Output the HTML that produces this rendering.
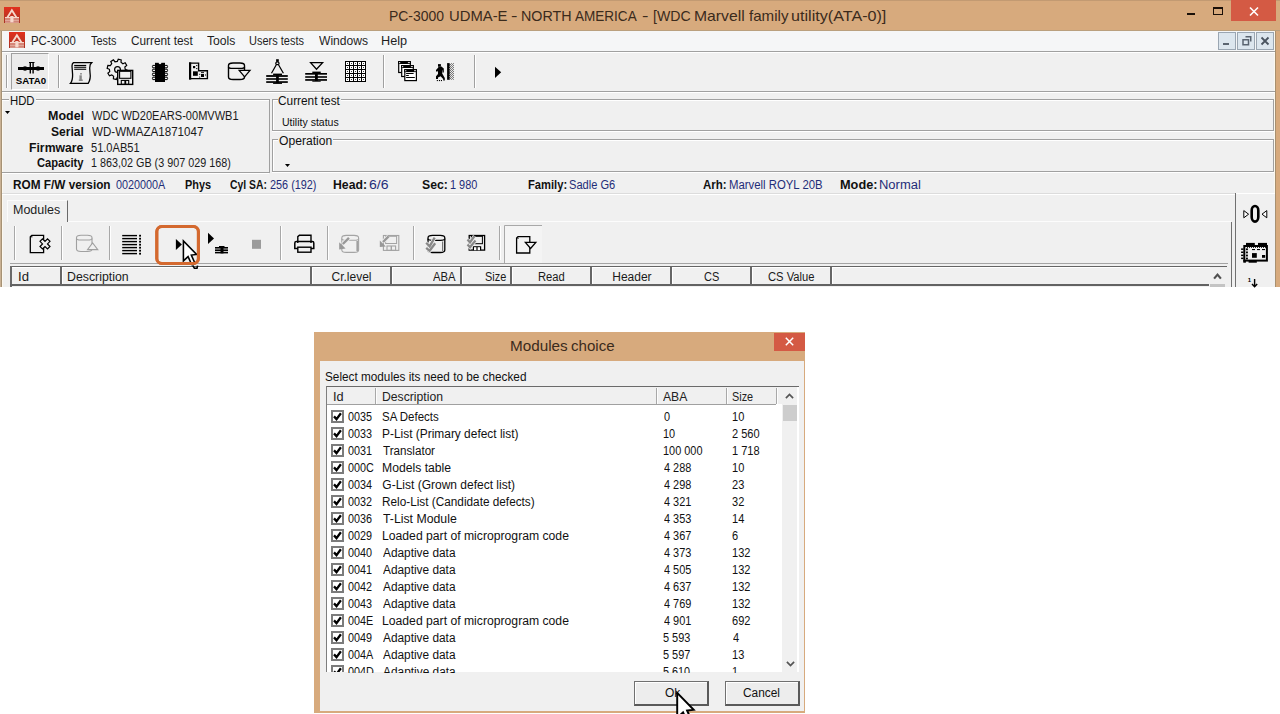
<!DOCTYPE html>
<html><head><meta charset="utf-8">
<style>
*{margin:0;padding:0;box-sizing:border-box}
html,body{width:1280px;height:714px;overflow:hidden;background:#fff;font-family:"Liberation Sans", sans-serif;color:#000}
.a{position:absolute}
svg.a{overflow:visible}
.t{position:absolute;white-space:nowrap;line-height:20px;transform-origin:0 0}
</style></head><body>
<div class="a" style="left:0px;top:0px;width:1280px;height:287px;background:#d7aa7d;"></div>
<div class="a" style="left:0px;top:0px;width:1280px;height:1px;background:#c29a72;"></div>
<div class="t" style="left:389.14px;top:5.70px;font-size:14.5px;color:#3b2b1c;transform:scaleX(0.9607);">PC-3000</div>
<div class="t" style="left:448.58px;top:5.70px;font-size:14.5px;color:#3b2b1c;transform:scaleX(1.0232);">UDMA-E</div>
<div class="t" style="left:510.67px;top:5.70px;font-size:14.5px;color:#3b2b1c;transform:scaleX(1.3333);">-</div>
<div class="t" style="left:520.51px;top:5.70px;font-size:14.5px;color:#3b2b1c;transform:scaleX(0.9857);">NORTH</div>
<div class="t" style="left:575.30px;top:5.70px;font-size:14.5px;color:#3b2b1c;transform:scaleX(0.9333);">AMERICA</div>
<div class="t" style="left:641.67px;top:5.70px;font-size:14.5px;color:#3b2b1c;transform:scaleX(1.3333);">-</div>
<div class="t" style="left:652.83px;top:5.70px;font-size:14.5px;color:#3b2b1c;transform:scaleX(0.9730);">[WDC</div>
<div class="t" style="left:693.72px;top:5.70px;font-size:14.5px;color:#3b2b1c;transform:scaleX(1.0844);">Marvell</div>
<div class="t" style="left:748.70px;top:5.70px;font-size:14.5px;color:#3b2b1c;transform:scaleX(1.0421);">family</div>
<div class="t" style="left:791.19px;top:5.70px;font-size:14.5px;color:#3b2b1c;transform:scaleX(1.1131);">utility(ATA-0)]</div>
<div class="a" style="left:1187px;top:13px;width:8px;height:2px;background:#1a1008;"></div>
<div class="a" style="left:1213px;top:7px;width:10px;height:8px;border:1px solid #1a1008;border-top-width:2px;"></div>
<div class="a" style="left:1231px;top:0px;width:45px;height:21px;background:#d45a44;"></div>
<svg class="a" style="left:1249px;top:7px" width="10" height="9" viewBox="0 0 10 9"><path d="M1 0.5L9 8.5M9 0.5L1 8.5" stroke="#fff" stroke-width="1.6"/></svg>
<div class="a" style="left:0px;top:30px;width:1280px;height:1px;background:#baa07e;"></div>
<div class="a" style="left:0px;top:31px;width:1px;height:256px;background:#c9b194;"></div>
<div class="a" style="left:1px;top:31px;width:1px;height:256px;background:#a69275;"></div>
<div class="a" style="left:1275px;top:31px;width:1px;height:256px;background:#a89070;"></div>
<div class="a" style="left:2px;top:31px;width:1273px;height:256px;background:#f0f0f0;"></div>
<div class="a" style="left:2px;top:31px;width:1273px;height:20px;background:#f5f6f7;"></div>
<div class="a" style="left:2px;top:31px;width:1px;height:256px;background:#fdf8ee;"></div>
<div class="a" style="left:1274px;top:31px;width:1px;height:256px;background:#fdf8ee;"></div>
<div class="a" style="left:2px;top:51px;width:1273px;height:1px;background:#a0a0a0;"></div>
<div class="a" style="left:2px;top:52px;width:1273px;height:1px;background:#ffffff;"></div>
<div class="t" style="left:31.35px;top:31.00px;font-size:12px;color:#1e1e1e;transform:scaleX(0.9457);">PC-3000</div>
<div class="t" style="left:91.40px;top:31.00px;font-size:12px;color:#1e1e1e;transform:scaleX(0.9071);">Tests</div>
<div class="t" style="left:130.72px;top:31.00px;font-size:12px;color:#1e1e1e;transform:scaleX(0.9839);">Current test</div>
<div class="t" style="left:207.40px;top:31.00px;font-size:12px;color:#1e1e1e;transform:scaleX(1.0143);">Tools</div>
<div class="t" style="left:249.48px;top:31.00px;font-size:12px;color:#1e1e1e;transform:scaleX(0.9153);">Users tests</div>
<div class="t" style="left:319.30px;top:31.00px;font-size:12px;color:#1e1e1e;transform:scaleX(1.0083);">Windows</div>
<div class="t" style="left:381.34px;top:31.00px;font-size:12px;color:#1e1e1e;transform:scaleX(1.0565);">Help</div>
<div class="a" style="left:1218px;top:32px;width:18px;height:18px;background:#dce6ee;border:1px solid #9aa6b2;"></div>
<div class="a" style="left:1237px;top:32px;width:18px;height:18px;background:#dce6ee;border:1px solid #9aa6b2;"></div>
<div class="a" style="left:1256px;top:32px;width:18px;height:18px;background:#dce6ee;border:1px solid #9aa6b2;"></div>
<div class="a" style="left:1223.3px;top:43px;width:6px;height:2px;background:#5a6470;"></div>
<svg class="a" style="left:1242px;top:36px" width="10" height="10" viewBox="0 0 10 10"><path d="M3.5 0.75H8.75V5.5M1 3.75H6.5V8.75H1Z" fill="none" stroke="#5a6470" stroke-width="1.5"/></svg>
<svg class="a" style="left:1261px;top:37px" width="8" height="8" viewBox="0 0 8 8"><path d="M0.5 0.5L7.5 7.5M7.5 0.5L0.5 7.5" stroke="#4a5460" stroke-width="1.8"/></svg>
<div class="a" style="left:2px;top:91px;width:1273px;height:1px;background:#a0a0a0;"></div>
<div class="a" style="left:2px;top:92px;width:1273px;height:1px;background:#ffffff;"></div>
<div class="a" style="left:6px;top:55px;width:1px;height:33px;background:#a0a0a0;"></div>
<div class="a" style="left:7px;top:55px;width:1px;height:33px;background:#ffffff;"></div>
<div class="a" style="left:11px;top:53px;width:38px;height:37px;background:#ebebeb;border:1px solid;border-color:#a0a0a0 #fff #fff #a0a0a0;"></div>
<div class="a" style="left:58px;top:55px;width:1px;height:33px;background:#a0a0a0;"></div>
<div class="a" style="left:59px;top:55px;width:1px;height:33px;background:#ffffff;"></div>
<div class="a" style="left:383px;top:55px;width:1px;height:33px;background:#a0a0a0;"></div>
<div class="a" style="left:384px;top:55px;width:1px;height:33px;background:#ffffff;"></div>
<div class="a" style="left:474px;top:55px;width:1px;height:33px;background:#a0a0a0;"></div>
<div class="a" style="left:475px;top:55px;width:1px;height:33px;background:#ffffff;"></div>
<div class="a" style="left:2px;top:99px;width:267px;height:1px;background:#a0a0a0;"></div>
<div class="a" style="left:2px;top:100px;width:267px;height:1px;background:#fff;"></div>
<div class="a" style="left:2px;top:172px;width:267px;height:1px;background:#a0a0a0;"></div>
<div class="a" style="left:2px;top:173px;width:267px;height:1px;background:#fff;"></div>
<div class="a" style="left:269px;top:99px;width:1px;height:74px;background:#a0a0a0;"></div>
<div class="a" style="left:9px;top:93px;width:27px;height:12px;background:#f0f0f0;"></div>
<div class="t" style="left:9.66px;top:90.80px;font-size:12px;color:#111;transform:scaleX(0.9440);">HDD</div>
<svg class="a" style="left:5px;top:111px" width="5" height="3" viewBox="0 0 5 3"><path d="M0 0H5L2.5 3Z" fill="#000"/></svg>
<div class="t" style="left:47.66px;top:105.80px;font-size:12px;color:#111;font-weight:bold;transform:scaleX(1.0394);">Model</div>
<div class="t" style="left:91.60px;top:105.80px;font-size:12px;color:#1a1a1a;transform:scaleX(0.9201);">WDC WD20EARS-00MVWB1</div>
<div class="t" style="left:50.79px;top:121.80px;font-size:12px;color:#111;font-weight:bold;transform:scaleX(1.0065);">Serial</div>
<div class="t" style="left:91.60px;top:121.80px;font-size:12px;color:#1a1a1a;transform:scaleX(0.9652);">WD-WMAZA1871047</div>
<div class="t" style="left:28.98px;top:137.50px;font-size:12px;color:#111;font-weight:bold;transform:scaleX(1.0192);">Firmware</div>
<div class="t" style="left:90.68px;top:137.50px;font-size:12px;color:#1a1a1a;transform:scaleX(0.9216);">51.0AB51</div>
<div class="t" style="left:36.50px;top:153.30px;font-size:12px;color:#111;font-weight:bold;transform:scaleX(0.9300);">Capacity</div>
<div class="t" style="left:90.70px;top:153.30px;font-size:12px;color:#1a1a1a;transform:scaleX(0.8994);">1 863,02 GB (3 907 029 168)</div>
<div class="a" style="left:272px;top:99px;width:1002px;height:1px;background:#a0a0a0;"></div>
<div class="a" style="left:273px;top:100px;width:1001px;height:1px;background:#fff;"></div>
<div class="a" style="left:272px;top:130px;width:1002px;height:1px;background:#a0a0a0;"></div>
<div class="a" style="left:272px;top:131px;width:1002px;height:1px;background:#fff;"></div>
<div class="a" style="left:272px;top:99px;width:1px;height:32px;background:#a0a0a0;"></div>
<div class="a" style="left:273px;top:100px;width:1px;height:30px;background:#fff;"></div>
<div class="a" style="left:1273px;top:99px;width:1px;height:32px;background:#a0a0a0;"></div>
<div class="a" style="left:278px;top:93px;width:63px;height:12px;background:#f0f0f0;"></div>
<div class="t" style="left:278.41px;top:90.60px;font-size:12px;color:#111;transform:scaleX(0.9871);">Current test</div>
<div class="t" style="left:281.54px;top:112.00px;font-size:11px;color:#111;transform:scaleX(0.9569);">Utility status</div>
<div class="a" style="left:272px;top:139px;width:1002px;height:1px;background:#a0a0a0;"></div>
<div class="a" style="left:273px;top:140px;width:1001px;height:1px;background:#fff;"></div>
<div class="a" style="left:272px;top:171px;width:1002px;height:1px;background:#a0a0a0;"></div>
<div class="a" style="left:272px;top:172px;width:1002px;height:1px;background:#fff;"></div>
<div class="a" style="left:272px;top:139px;width:1px;height:33px;background:#a0a0a0;"></div>
<div class="a" style="left:273px;top:140px;width:1px;height:31px;background:#fff;"></div>
<div class="a" style="left:1273px;top:139px;width:1px;height:33px;background:#a0a0a0;"></div>
<div class="a" style="left:278px;top:133px;width:55px;height:12px;background:#f0f0f0;"></div>
<div class="t" style="left:279.40px;top:130.70px;font-size:12px;color:#111;transform:scaleX(1.0096);">Operation</div>
<svg class="a" style="left:285px;top:164px" width="5" height="3" viewBox="0 0 5 3"><path d="M0 0H5L2.5 3Z" fill="#000"/></svg>
<div class="t" style="left:12.77px;top:174.80px;font-size:12px;color:#111;font-weight:bold;transform:scaleX(0.9821);">ROM F/W version</div>
<div class="t" style="left:115.50px;top:174.80px;font-size:12px;color:#1f2d78;transform:scaleX(0.9000);">0020000A</div>
<div class="t" style="left:184.59px;top:174.80px;font-size:12px;color:#111;font-weight:bold;transform:scaleX(0.9074);">Phys</div>
<div class="t" style="left:229.50px;top:174.80px;font-size:12px;color:#111;font-weight:bold;transform:scaleX(0.8631);">Cyl SA:</div>
<div class="t" style="left:269.85px;top:174.80px;font-size:12px;color:#1f2d78;transform:scaleX(0.9050);">256 (192)</div>
<div class="t" style="left:333.38px;top:174.80px;font-size:12px;color:#111;font-weight:bold;transform:scaleX(1.0194);">Head:</div>
<div class="t" style="left:368.83px;top:174.80px;font-size:12px;color:#1f2d78;transform:scaleX(1.1667);">6/6</div>
<div class="t" style="left:421.98px;top:174.80px;font-size:12px;color:#111;font-weight:bold;transform:scaleX(1.0217);">Sec:</div>
<div class="t" style="left:449.69px;top:174.80px;font-size:12px;color:#1f2d78;transform:scaleX(0.9103);">1 980</div>
<div class="t" style="left:527.82px;top:174.80px;font-size:12px;color:#111;font-weight:bold;transform:scaleX(0.9313);">Family:</div>
<div class="t" style="left:569.08px;top:174.80px;font-size:12px;color:#1f2d78;transform:scaleX(0.9245);">Sadle G6</div>
<div class="t" style="left:703.00px;top:174.80px;font-size:12px;color:#111;font-weight:bold;transform:scaleX(0.9583);">Arh:</div>
<div class="t" style="left:729.35px;top:174.80px;font-size:12px;color:#1f2d78;transform:scaleX(0.9459);">Marvell ROYL 20B</div>
<div class="t" style="left:839.94px;top:174.80px;font-size:12px;color:#111;font-weight:bold;transform:scaleX(1.0606);">Mode:</div>
<div class="t" style="left:878.92px;top:174.80px;font-size:12px;color:#1f2d78;transform:scaleX(1.0811);">Normal</div>
<div class="a" style="left:2px;top:193px;width:1233px;height:1px;background:#dcdcdc;"></div>
<div class="a" style="left:2px;top:194px;width:1233px;height:1px;background:#ffffff;"></div>
<div class="a" style="left:7px;top:200px;width:61px;height:22px;background:#f0f0f0;border:1px solid #fbfbfb;border-bottom:none;border-right:1.6px solid #6a6a6a;"></div>
<div class="t" style="left:13.21px;top:199.75px;font-size:12px;color:#222;transform:scaleX(1.0398);">Modules</div>
<div class="a" style="left:68px;top:221px;width:1163px;height:1px;background:#fcfcfc;"></div>
<div class="a" style="left:1231px;top:222px;width:1.4px;height:65px;background:#707070;"></div>
<div class="a" style="left:1235px;top:193px;width:1.4px;height:94px;background:#707070;"></div>
<div class="a" style="left:1236.4px;top:193px;width:38.6px;height:94px;background:#f0f0f0;"></div>
<div class="a" style="left:1236.4px;top:193px;width:38.6px;height:1px;background:#fff;"></div>
<div class="a" style="left:14px;top:226px;width:1px;height:34px;background:#a8a8a8;"></div>
<div class="a" style="left:15px;top:226px;width:1px;height:34px;background:#fff;"></div>
<div class="a" style="left:61px;top:226px;width:1px;height:34px;background:#a8a8a8;"></div>
<div class="a" style="left:62px;top:226px;width:1px;height:34px;background:#fff;"></div>
<div class="a" style="left:109px;top:226px;width:1px;height:34px;background:#a8a8a8;"></div>
<div class="a" style="left:110px;top:226px;width:1px;height:34px;background:#fff;"></div>
<div class="a" style="left:280px;top:226px;width:1px;height:34px;background:#a8a8a8;"></div>
<div class="a" style="left:281px;top:226px;width:1px;height:34px;background:#fff;"></div>
<div class="a" style="left:327px;top:226px;width:1px;height:34px;background:#a8a8a8;"></div>
<div class="a" style="left:328px;top:226px;width:1px;height:34px;background:#fff;"></div>
<div class="a" style="left:413px;top:226px;width:1px;height:34px;background:#a8a8a8;"></div>
<div class="a" style="left:414px;top:226px;width:1px;height:34px;background:#fff;"></div>
<div class="a" style="left:499px;top:226px;width:1px;height:34px;background:#a8a8a8;"></div>
<div class="a" style="left:500px;top:226px;width:1px;height:34px;background:#fff;"></div>
<div class="a" style="left:504px;top:226px;width:38px;height:37px;background:#f4f4f4;"></div>
<div class="a" style="left:10px;top:263px;width:1218px;height:1px;background:#a4a4a4;"></div>
<div class="a" style="left:10px;top:265.5px;width:1217px;height:1.6px;background:#656565;"></div>
<div class="a" style="left:10.4px;top:265.5px;width:1.6px;height:21px;background:#6a6a6a;"></div>
<div class="a" style="left:12px;top:267px;width:1198px;height:17.5px;background:#f0f0f0;"></div>
<div class="a" style="left:12px;top:267px;width:1198px;height:1px;background:#ffffff;"></div>
<div class="a" style="left:10.4px;top:284.4px;width:1199px;height:1.8px;background:#626262;"></div>
<div class="a" style="left:1210px;top:284.2px;width:15px;height:2.8px;background:#c4c4c4;"></div>
<div class="a" style="left:60.3px;top:266.5px;width:1.5px;height:19px;background:#666;"></div>
<div class="a" style="left:61.8px;top:267px;width:1px;height:17px;background:#fff;"></div>
<div class="a" style="left:310.3px;top:266.5px;width:1.5px;height:19px;background:#666;"></div>
<div class="a" style="left:311.8px;top:267px;width:1px;height:17px;background:#fff;"></div>
<div class="a" style="left:390.3px;top:266.5px;width:1.5px;height:19px;background:#666;"></div>
<div class="a" style="left:391.8px;top:267px;width:1px;height:17px;background:#fff;"></div>
<div class="a" style="left:460.3px;top:266.5px;width:1.5px;height:19px;background:#666;"></div>
<div class="a" style="left:461.8px;top:267px;width:1px;height:17px;background:#fff;"></div>
<div class="a" style="left:510.3px;top:266.5px;width:1.5px;height:19px;background:#666;"></div>
<div class="a" style="left:511.8px;top:267px;width:1px;height:17px;background:#fff;"></div>
<div class="a" style="left:590.3px;top:266.5px;width:1.5px;height:19px;background:#666;"></div>
<div class="a" style="left:591.8px;top:267px;width:1px;height:17px;background:#fff;"></div>
<div class="a" style="left:670.3px;top:266.5px;width:1.5px;height:19px;background:#666;"></div>
<div class="a" style="left:671.8px;top:267px;width:1px;height:17px;background:#fff;"></div>
<div class="a" style="left:750.3px;top:266.5px;width:1.5px;height:19px;background:#666;"></div>
<div class="a" style="left:751.8px;top:267px;width:1px;height:17px;background:#fff;"></div>
<div class="a" style="left:830.3px;top:266.5px;width:1.5px;height:19px;background:#666;"></div>
<div class="a" style="left:831.8px;top:267px;width:1px;height:17px;background:#fff;"></div>
<div class="t" style="left:17.66px;top:266.50px;font-size:12px;color:#1a1a1a;transform:scaleX(1.0938);">Id</div>
<div class="t" style="left:66.97px;top:266.50px;font-size:12px;color:#1a1a1a;transform:scaleX(1.0259);">Description</div>
<div class="t" style="left:331.50px;top:266.50px;font-size:12px;color:#1a1a1a;">Cr.level</div>
<div class="t" style="left:433.00px;top:266.50px;font-size:12px;color:#1a1a1a;transform:scaleX(0.9375);">ABA</div>
<div class="t" style="left:485.34px;top:266.50px;font-size:12px;color:#1a1a1a;transform:scaleX(0.9091);">Size</div>
<div class="t" style="left:538.31px;top:266.50px;font-size:12px;color:#1a1a1a;transform:scaleX(0.9352);">Read</div>
<div class="t" style="left:612.25px;top:266.50px;font-size:12px;color:#1a1a1a;">Header</div>
<div class="t" style="left:704.08px;top:266.50px;font-size:12px;color:#1a1a1a;transform:scaleX(0.9167);">CS</div>
<div class="t" style="left:768.32px;top:266.50px;font-size:12px;color:#1a1a1a;transform:scaleX(0.9337);">CS Value</div>
<svg class="a" style="left:1213px;top:272px" width="9" height="8" viewBox="0 0 9 8"><path d="M1.1 6.6L4.5 2.6L7.9 6.6" fill="none" stroke="#505050" stroke-width="2.2"/></svg>
<div class="a" style="left:314px;top:332px;width:491px;height:381px;background:#d7aa7d;"></div>
<div class="a" style="left:319.5px;top:360.5px;width:484px;height:350.5px;background:#f0f0f0;"></div>
<div class="t" style="left:509.65px;top:335.80px;font-size:14.5px;color:#3b2b1c;transform:scaleX(1.0528);">Modules</div>
<div class="t" style="left:570.56px;top:335.80px;font-size:14.5px;color:#3b2b1c;transform:scaleX(1.0400);">choice</div>
<div class="a" style="left:774px;top:332.5px;width:30.5px;height:18.5px;background:#d45a44;"></div>
<svg class="a" style="left:785px;top:337px" width="9" height="9" viewBox="0 0 9 9"><path d="M0.8 0.8L8.2 8.2M8.2 0.8L0.8 8.2" stroke="#fff" stroke-width="1.5"/></svg>
<div class="t" style="left:324.52px;top:366.80px;font-size:12px;color:#111;transform:scaleX(0.9804);">Select modules its need to be checked</div>
<div class="a" style="left:325.5px;top:385.8px;width:473.2px;height:286.7px;background:#ffffff;border-left:1.6px solid #7e7e7e;border-top:1.6px solid #6a6a6a;"></div>
<div class="a" style="left:327px;top:387.4px;width:455px;height:16.6px;background:#f0f0f0;"></div>
<div class="a" style="left:327px;top:403.6px;width:449px;height:1px;background:#a0a0a0;"></div>
<div class="a" style="left:375.2px;top:388px;width:1px;height:16px;background:#a8a8a8;"></div>
<div class="a" style="left:376.2px;top:388px;width:1px;height:16px;background:#fdfdfd;"></div>
<div class="a" style="left:655.5px;top:388px;width:1px;height:16px;background:#a8a8a8;"></div>
<div class="a" style="left:656.5px;top:388px;width:1px;height:16px;background:#fdfdfd;"></div>
<div class="a" style="left:725.5px;top:388px;width:1px;height:16px;background:#a8a8a8;"></div>
<div class="a" style="left:726.5px;top:388px;width:1px;height:16px;background:#fdfdfd;"></div>
<div class="a" style="left:775.5px;top:388px;width:1px;height:16px;background:#a8a8a8;"></div>
<div class="a" style="left:776.5px;top:388px;width:1px;height:16px;background:#fdfdfd;"></div>
<div class="t" style="left:332.84px;top:386.80px;font-size:12px;color:#222;transform:scaleX(1.0625);">Id</div>
<div class="t" style="left:382.28px;top:386.80px;font-size:12px;color:#222;transform:scaleX(1.0155);">Description</div>
<div class="t" style="left:663.20px;top:386.80px;font-size:12px;color:#222;transform:scaleX(1.0125);">ABA</div>
<div class="t" style="left:732.40px;top:386.80px;font-size:12px;color:#222;transform:scaleX(0.9045);">Size</div>
<div class="a" style="left:782px;top:387.4px;width:15px;height:285px;background:#f0f0f0;"></div>
<div class="a" style="left:782.5px;top:404.5px;width:14px;height:16px;background:#cdcdcd;"></div>
<svg class="a" style="left:785px;top:393px" width="9" height="6" viewBox="0 0 9 6"><path d="M0.9 5.2L4.5 1.4L8.1 5.2" fill="none" stroke="#555" stroke-width="1.7"/></svg>
<svg class="a" style="left:785.5px;top:660.5px" width="9" height="6" viewBox="0 0 9 6"><path d="M0.9 0.8L4.5 4.6L8.1 0.8" fill="none" stroke="#555" stroke-width="1.7"/></svg>
<div class="t" style="left:347.50px;top:406.80px;font-size:12px;color:#111;transform:scaleX(0.9000);">0035</div>
<div class="t" style="left:382.34px;top:406.80px;font-size:12px;color:#111;transform:scaleX(0.9552);">SA Defects</div>
<div class="t" style="left:663.50px;top:406.80px;font-size:12px;color:#111;transform:scaleX(0.9100);">0</div>
<div class="t" style="left:732.38px;top:406.80px;font-size:12px;color:#111;transform:scaleX(0.9200);">10</div>
<div class="t" style="left:347.50px;top:423.80px;font-size:12px;color:#111;transform:scaleX(0.9000);">0033</div>
<div class="t" style="left:382.31px;top:423.80px;font-size:12px;color:#111;transform:scaleX(0.9934);">P-List (Primary defect list)</div>
<div class="t" style="left:662.59px;top:423.80px;font-size:12px;color:#111;transform:scaleX(0.9100);">10</div>
<div class="t" style="left:732.38px;top:423.80px;font-size:12px;color:#111;transform:scaleX(0.9200);">2 560</div>
<div class="t" style="left:347.50px;top:440.80px;font-size:12px;color:#111;transform:scaleX(0.9000);">0031</div>
<div class="t" style="left:383.30px;top:440.80px;font-size:12px;color:#111;transform:scaleX(0.9704);">Translator</div>
<div class="t" style="left:662.59px;top:440.80px;font-size:12px;color:#111;transform:scaleX(0.9100);">100 000</div>
<div class="t" style="left:732.38px;top:440.80px;font-size:12px;color:#111;transform:scaleX(0.9200);">1 718</div>
<div class="t" style="left:347.50px;top:457.80px;font-size:12px;color:#111;transform:scaleX(0.9000);">000C</div>
<div class="t" style="left:382.29px;top:457.80px;font-size:12px;color:#111;transform:scaleX(1.0149);">Models table</div>
<div class="t" style="left:663.50px;top:457.80px;font-size:12px;color:#111;transform:scaleX(0.9100);">4 288</div>
<div class="t" style="left:732.38px;top:457.80px;font-size:12px;color:#111;transform:scaleX(0.9200);">10</div>
<div class="t" style="left:347.50px;top:474.80px;font-size:12px;color:#111;transform:scaleX(0.9000);">0034</div>
<div class="t" style="left:382.30px;top:474.80px;font-size:12px;color:#111;">G-List (Grown defect list)</div>
<div class="t" style="left:663.50px;top:474.80px;font-size:12px;color:#111;transform:scaleX(0.9100);">4 298</div>
<div class="t" style="left:732.38px;top:474.80px;font-size:12px;color:#111;transform:scaleX(0.9200);">23</div>
<div class="t" style="left:347.50px;top:491.80px;font-size:12px;color:#111;transform:scaleX(0.9000);">0032</div>
<div class="t" style="left:382.32px;top:491.80px;font-size:12px;color:#111;transform:scaleX(0.9825);">Relo-List (Candidate defects)</div>
<div class="t" style="left:663.50px;top:491.80px;font-size:12px;color:#111;transform:scaleX(0.9100);">4 321</div>
<div class="t" style="left:732.38px;top:491.80px;font-size:12px;color:#111;transform:scaleX(0.9200);">32</div>
<div class="t" style="left:347.50px;top:508.80px;font-size:12px;color:#111;transform:scaleX(0.9000);">0036</div>
<div class="t" style="left:383.30px;top:508.80px;font-size:12px;color:#111;transform:scaleX(1.0236);">T-List Module</div>
<div class="t" style="left:663.50px;top:508.80px;font-size:12px;color:#111;transform:scaleX(0.9100);">4 353</div>
<div class="t" style="left:732.38px;top:508.80px;font-size:12px;color:#111;transform:scaleX(0.9200);">14</div>
<div class="t" style="left:347.50px;top:525.80px;font-size:12px;color:#111;transform:scaleX(0.9000);">0029</div>
<div class="t" style="left:382.28px;top:525.80px;font-size:12px;color:#111;transform:scaleX(1.0153);">Loaded part of microprogram code</div>
<div class="t" style="left:663.50px;top:525.80px;font-size:12px;color:#111;transform:scaleX(0.9100);">4 367</div>
<div class="t" style="left:732.38px;top:525.80px;font-size:12px;color:#111;transform:scaleX(0.9200);">6</div>
<div class="t" style="left:347.50px;top:542.80px;font-size:12px;color:#111;transform:scaleX(0.9000);">0040</div>
<div class="t" style="left:383.30px;top:542.80px;font-size:12px;color:#111;transform:scaleX(0.9877);">Adaptive data</div>
<div class="t" style="left:663.50px;top:542.80px;font-size:12px;color:#111;transform:scaleX(0.9100);">4 373</div>
<div class="t" style="left:732.38px;top:542.80px;font-size:12px;color:#111;transform:scaleX(0.9200);">132</div>
<div class="t" style="left:347.50px;top:559.80px;font-size:12px;color:#111;transform:scaleX(0.9000);">0041</div>
<div class="t" style="left:383.30px;top:559.80px;font-size:12px;color:#111;transform:scaleX(0.9877);">Adaptive data</div>
<div class="t" style="left:663.50px;top:559.80px;font-size:12px;color:#111;transform:scaleX(0.9100);">4 505</div>
<div class="t" style="left:732.38px;top:559.80px;font-size:12px;color:#111;transform:scaleX(0.9200);">132</div>
<div class="t" style="left:347.50px;top:576.80px;font-size:12px;color:#111;transform:scaleX(0.9000);">0042</div>
<div class="t" style="left:383.30px;top:576.80px;font-size:12px;color:#111;transform:scaleX(0.9877);">Adaptive data</div>
<div class="t" style="left:663.50px;top:576.80px;font-size:12px;color:#111;transform:scaleX(0.9100);">4 637</div>
<div class="t" style="left:732.38px;top:576.80px;font-size:12px;color:#111;transform:scaleX(0.9200);">132</div>
<div class="t" style="left:347.50px;top:593.80px;font-size:12px;color:#111;transform:scaleX(0.9000);">0043</div>
<div class="t" style="left:383.30px;top:593.80px;font-size:12px;color:#111;transform:scaleX(0.9877);">Adaptive data</div>
<div class="t" style="left:663.50px;top:593.80px;font-size:12px;color:#111;transform:scaleX(0.9100);">4 769</div>
<div class="t" style="left:732.38px;top:593.80px;font-size:12px;color:#111;transform:scaleX(0.9200);">132</div>
<div class="t" style="left:347.50px;top:610.80px;font-size:12px;color:#111;transform:scaleX(0.9000);">004E</div>
<div class="t" style="left:382.28px;top:610.80px;font-size:12px;color:#111;transform:scaleX(1.0153);">Loaded part of microprogram code</div>
<div class="t" style="left:663.50px;top:610.80px;font-size:12px;color:#111;transform:scaleX(0.9100);">4 901</div>
<div class="t" style="left:732.38px;top:610.80px;font-size:12px;color:#111;transform:scaleX(0.9200);">692</div>
<div class="t" style="left:347.50px;top:627.80px;font-size:12px;color:#111;transform:scaleX(0.9000);">0049</div>
<div class="t" style="left:383.30px;top:627.80px;font-size:12px;color:#111;transform:scaleX(0.9877);">Adaptive data</div>
<div class="t" style="left:662.59px;top:627.80px;font-size:12px;color:#111;transform:scaleX(0.9100);">5 593</div>
<div class="t" style="left:733.30px;top:627.80px;font-size:12px;color:#111;transform:scaleX(0.9200);">4</div>
<div class="t" style="left:347.50px;top:644.80px;font-size:12px;color:#111;transform:scaleX(0.9000);">004A</div>
<div class="t" style="left:383.30px;top:644.80px;font-size:12px;color:#111;transform:scaleX(0.9877);">Adaptive data</div>
<div class="t" style="left:662.59px;top:644.80px;font-size:12px;color:#111;transform:scaleX(0.9100);">5 597</div>
<div class="t" style="left:732.38px;top:644.80px;font-size:12px;color:#111;transform:scaleX(0.9200);">13</div>
<div class="a" style="left:327px;top:662px;width:455px;height:10.5px;overflow:hidden">
<div class="t" style="left:20.50px;top:-0.20px;font-size:12px;color:#111;transform:scaleX(0.9000);">004D</div>
<div class="t" style="left:56.30px;top:-0.20px;font-size:12px;color:#111;transform:scaleX(0.9900);">Adaptive data</div>
<div class="t" style="left:335.60px;top:-0.20px;font-size:12px;color:#111;transform:scaleX(0.9000);">5 610</div>
<div class="t" style="left:405.40px;top:-0.20px;font-size:12px;color:#111;transform:scaleX(0.9000);">1</div>
</div>
<div class="a" style="left:331px;top:410.2px;width:13px;height:13.0px;overflow:hidden"><div style="width:13px;height:13px;border:2px solid #7c7c7c;background:#fff"></div><svg class="a" style="left:0;top:0" width="13" height="13" viewBox="0 0 13 13"><path d="M3 6.4L5.5 9.1L9.9 3.3" fill="none" stroke="#000" stroke-width="2.3"/></svg></div><div class="a" style="left:331px;top:427.2px;width:13px;height:13.0px;overflow:hidden"><div style="width:13px;height:13px;border:2px solid #7c7c7c;background:#fff"></div><svg class="a" style="left:0;top:0" width="13" height="13" viewBox="0 0 13 13"><path d="M3 6.4L5.5 9.1L9.9 3.3" fill="none" stroke="#000" stroke-width="2.3"/></svg></div><div class="a" style="left:331px;top:444.2px;width:13px;height:13.0px;overflow:hidden"><div style="width:13px;height:13px;border:2px solid #7c7c7c;background:#fff"></div><svg class="a" style="left:0;top:0" width="13" height="13" viewBox="0 0 13 13"><path d="M3 6.4L5.5 9.1L9.9 3.3" fill="none" stroke="#000" stroke-width="2.3"/></svg></div><div class="a" style="left:331px;top:461.2px;width:13px;height:13.0px;overflow:hidden"><div style="width:13px;height:13px;border:2px solid #7c7c7c;background:#fff"></div><svg class="a" style="left:0;top:0" width="13" height="13" viewBox="0 0 13 13"><path d="M3 6.4L5.5 9.1L9.9 3.3" fill="none" stroke="#000" stroke-width="2.3"/></svg></div><div class="a" style="left:331px;top:478.2px;width:13px;height:13.0px;overflow:hidden"><div style="width:13px;height:13px;border:2px solid #7c7c7c;background:#fff"></div><svg class="a" style="left:0;top:0" width="13" height="13" viewBox="0 0 13 13"><path d="M3 6.4L5.5 9.1L9.9 3.3" fill="none" stroke="#000" stroke-width="2.3"/></svg></div><div class="a" style="left:331px;top:495.2px;width:13px;height:13.0px;overflow:hidden"><div style="width:13px;height:13px;border:2px solid #7c7c7c;background:#fff"></div><svg class="a" style="left:0;top:0" width="13" height="13" viewBox="0 0 13 13"><path d="M3 6.4L5.5 9.1L9.9 3.3" fill="none" stroke="#000" stroke-width="2.3"/></svg></div><div class="a" style="left:331px;top:512.2px;width:13px;height:13.0px;overflow:hidden"><div style="width:13px;height:13px;border:2px solid #7c7c7c;background:#fff"></div><svg class="a" style="left:0;top:0" width="13" height="13" viewBox="0 0 13 13"><path d="M3 6.4L5.5 9.1L9.9 3.3" fill="none" stroke="#000" stroke-width="2.3"/></svg></div><div class="a" style="left:331px;top:529.2px;width:13px;height:13.0px;overflow:hidden"><div style="width:13px;height:13px;border:2px solid #7c7c7c;background:#fff"></div><svg class="a" style="left:0;top:0" width="13" height="13" viewBox="0 0 13 13"><path d="M3 6.4L5.5 9.1L9.9 3.3" fill="none" stroke="#000" stroke-width="2.3"/></svg></div><div class="a" style="left:331px;top:546.2px;width:13px;height:13.0px;overflow:hidden"><div style="width:13px;height:13px;border:2px solid #7c7c7c;background:#fff"></div><svg class="a" style="left:0;top:0" width="13" height="13" viewBox="0 0 13 13"><path d="M3 6.4L5.5 9.1L9.9 3.3" fill="none" stroke="#000" stroke-width="2.3"/></svg></div><div class="a" style="left:331px;top:563.2px;width:13px;height:13.0px;overflow:hidden"><div style="width:13px;height:13px;border:2px solid #7c7c7c;background:#fff"></div><svg class="a" style="left:0;top:0" width="13" height="13" viewBox="0 0 13 13"><path d="M3 6.4L5.5 9.1L9.9 3.3" fill="none" stroke="#000" stroke-width="2.3"/></svg></div><div class="a" style="left:331px;top:580.2px;width:13px;height:13.0px;overflow:hidden"><div style="width:13px;height:13px;border:2px solid #7c7c7c;background:#fff"></div><svg class="a" style="left:0;top:0" width="13" height="13" viewBox="0 0 13 13"><path d="M3 6.4L5.5 9.1L9.9 3.3" fill="none" stroke="#000" stroke-width="2.3"/></svg></div><div class="a" style="left:331px;top:597.2px;width:13px;height:13.0px;overflow:hidden"><div style="width:13px;height:13px;border:2px solid #7c7c7c;background:#fff"></div><svg class="a" style="left:0;top:0" width="13" height="13" viewBox="0 0 13 13"><path d="M3 6.4L5.5 9.1L9.9 3.3" fill="none" stroke="#000" stroke-width="2.3"/></svg></div><div class="a" style="left:331px;top:614.2px;width:13px;height:13.0px;overflow:hidden"><div style="width:13px;height:13px;border:2px solid #7c7c7c;background:#fff"></div><svg class="a" style="left:0;top:0" width="13" height="13" viewBox="0 0 13 13"><path d="M3 6.4L5.5 9.1L9.9 3.3" fill="none" stroke="#000" stroke-width="2.3"/></svg></div><div class="a" style="left:331px;top:631.2px;width:13px;height:13.0px;overflow:hidden"><div style="width:13px;height:13px;border:2px solid #7c7c7c;background:#fff"></div><svg class="a" style="left:0;top:0" width="13" height="13" viewBox="0 0 13 13"><path d="M3 6.4L5.5 9.1L9.9 3.3" fill="none" stroke="#000" stroke-width="2.3"/></svg></div><div class="a" style="left:331px;top:648.2px;width:13px;height:13.0px;overflow:hidden"><div style="width:13px;height:13px;border:2px solid #7c7c7c;background:#fff"></div><svg class="a" style="left:0;top:0" width="13" height="13" viewBox="0 0 13 13"><path d="M3 6.4L5.5 9.1L9.9 3.3" fill="none" stroke="#000" stroke-width="2.3"/></svg></div><div class="a" style="left:331px;top:665.2px;width:13px;height:7.3px;overflow:hidden"><div style="width:13px;height:13px;border:2px solid #7c7c7c;background:#fff"></div><svg class="a" style="left:0;top:0" width="13" height="13" viewBox="0 0 13 13"><path d="M3 6.4L5.5 9.1L9.9 3.3" fill="none" stroke="#000" stroke-width="2.3"/></svg></div>
<div class="a" style="left:634px;top:681px;width:75px;height:24.5px;background:#ededed;border:1px solid #707070;border-right:2px solid #5a5a5a;border-bottom:2px solid #5a5a5a;box-shadow:inset 1px 1px 0 #fff;"></div>
<div class="t" style="left:665.00px;top:682.60px;font-size:12px;color:#111;">Ok</div>
<div class="a" style="left:725px;top:681px;width:75px;height:24.5px;background:#ededed;border:1px solid #707070;border-right:2px solid #5a5a5a;border-bottom:2px solid #5a5a5a;box-shadow:inset 1px 1px 0 #fff;"></div>
<div class="t" style="left:743.41px;top:682.60px;font-size:12px;color:#111;transform:scaleX(0.9889);">Cancel</div>
<svg class="a" style="left:0;top:0" width="1280" height="714" viewBox="0 0 1280 714"><rect x="18" y="67" width="26" height="3" fill="#000"/><circle cx="25" cy="68.5" r="2.3" fill="#000"/><circle cx="38" cy="68.5" r="2.3" fill="#000"/><rect x="29.6" y="62" width="1.4" height="11.5" fill="#000"/><rect x="32.4" y="62" width="1.4" height="11.5" fill="#000"/><rect x="29" y="62" width="5.5" height="1" fill="#000"/><text x="15.8" y="83.6" font-family="Liberation Sans" font-weight="bold" font-size="8.4" textLength="30.4" lengthAdjust="spacingAndGlyphs" fill="#000">SATA0</text><path d="M73.5,62.6 H91.8 L90.2,64.6 Q89.3,67.5 90,72.5 Q91,79 88.2,83.4 H70.4 Q72.8,80.5 72.6,74.5 Q72.2,69 72,66 Q72,63.5 73.5,62.6 Z" fill="none" stroke="#000" stroke-width="1.3"/><rect x="74.2" y="64.9" width="12" height="1.1" fill="#000"/><rect x="74.2" y="66.7" width="12" height="1.1" fill="#000"/><rect x="74.2" y="68.7" width="12" height="1.1" fill="#000"/><rect x="80.2" y="73" width="1.6" height="1.6" fill="#888"/><rect x="79.4" y="75.3" width="2.4" height="5.5" fill="#888"/><rect x="78.8" y="79.5" width="4" height="1.4" fill="#888"/><path d="M125.20,69.30L127.45,70.26L126.72,73.20L124.28,73.00L122.89,74.89L123.80,77.16L121.20,78.72L119.62,76.85L117.30,77.20L116.34,79.45L113.40,78.72L113.60,76.28L111.71,74.89L109.44,75.80L107.88,73.20L109.75,71.62L109.40,69.30L107.15,68.34L107.88,65.40L110.32,65.60L111.71,63.71L110.80,61.44L113.40,59.88L114.98,61.75L117.30,61.40L118.26,59.15L121.20,59.88L121.00,62.32L122.89,63.71L125.16,62.80L126.72,65.40L124.85,66.98Z" fill="none" stroke="#000" stroke-width="1.2"/><circle cx="117.5" cy="69.5" r="2.9" fill="none" stroke="#000" stroke-width="1.2"/><rect x="117.7" y="70.4" width="15" height="14" fill="#f0f0f0" stroke="#000" stroke-width="1.4"/><rect x="119.6" y="71.3" width="11.3" height="7" fill="none" stroke="#000" stroke-width="1.1"/><rect x="121.3" y="80.4" width="7.4" height="4" fill="none" stroke="#000" stroke-width="1.1"/><rect x="124.4" y="80.4" width="1.8" height="4" fill="#000"/><rect x="155" y="62.8" width="10" height="19.2" fill="#000"/><circle cx="160" cy="62.8" r="1.4" fill="#f0f0f0"/><path d="M155,65.39999999999999 H152.8 Q152,66.6 152.8,67.8 H155" fill="none" stroke="#000" stroke-width="1"/><path d="M165,65.39999999999999 H167.2 Q168,66.6 167.2,67.8 H165" fill="none" stroke="#000" stroke-width="1"/><path d="M155,69.2 H152.8 Q152,70.4 152.8,71.60000000000001 H155" fill="none" stroke="#000" stroke-width="1"/><path d="M165,69.2 H167.2 Q168,70.4 167.2,71.60000000000001 H165" fill="none" stroke="#000" stroke-width="1"/><path d="M155,73.2 H152.8 Q152,74.4 152.8,75.60000000000001 H155" fill="none" stroke="#000" stroke-width="1"/><path d="M165,73.2 H167.2 Q168,74.4 167.2,75.60000000000001 H165" fill="none" stroke="#000" stroke-width="1"/><path d="M155,77.2 H152.8 Q152,78.4 152.8,79.60000000000001 H155" fill="none" stroke="#000" stroke-width="1"/><path d="M165,77.2 H167.2 Q168,78.4 167.2,79.60000000000001 H165" fill="none" stroke="#000" stroke-width="1"/><rect x="189" y="62.2" width="2.2" height="17.5" fill="#000"/><path d="M191,63.1 H198.6 V70.8 H207.4 V78.6 H191" fill="none" stroke="#000" stroke-width="1.4"/><rect x="193" y="71.3" width="4.8" height="4.5" fill="#000"/><rect x="193" y="66" width="2.2" height="2.2" fill="#000"/><rect x="196.2" y="65" width="1.1" height="1.1" fill="#000"/><rect x="196.2" y="68" width="1.1" height="1.1" fill="#000"/><rect x="201" y="74" width="3" height="3" fill="#000"/><rect x="201" y="72.2" width="3" height="0.9" fill="#000"/><rect x="199.2" y="73.8" width="1" height="1" fill="#000"/><rect x="199.2" y="76.6" width="1" height="1" fill="#000"/><rect x="205" y="74.5" width="1" height="1" fill="#000"/><path d="M228.5,65.5 Q228.5,63 233.0,63 H240.0 Q244.5,63 244.5,65.5 V77.0 Q244.5,79.5 240.0,79.5 H233.0 Q228.5,79.5 228.5,77.0 Z" fill="none" stroke="#000" stroke-width="1.4"/><path d="M228.5,66.9 Q228.5,68.4 233.0,68.4 H240.0 Q244.5,68.4 244.5,66.9" fill="none" stroke="#000" stroke-width="1.4"/><path d="M239.2,70.4 H250 L244.6,76.8 Z" fill="#f0f0f0" stroke="#000" stroke-width="1.3"/><rect x="276.1" y="59.2" width="2.7" height="2.7" fill="#000"/><ellipse cx="277.4" cy="63.3" rx="1.7" ry="1.3" fill="#fff" stroke="#000" stroke-width="1.2"/><path d="M276.3,64.8 L271.5,73.2 M278.5,64.8 L283.4,73.2" stroke="#000" stroke-width="1.25"/><rect x="266.2" y="75.1" width="21.6" height="1.8" fill="#000"/><rect x="266.2" y="78.2" width="21.6" height="1.6" fill="#000"/><rect x="266.2" y="81.2" width="21.6" height="1.7" fill="#000"/><rect x="276.1" y="74" width="2.7" height="9" fill="#000"/><rect x="273.1" y="73.6" width="8.9" height="1.6" fill="#000"/><rect x="273.1" y="82.6" width="8.9" height="1.3" fill="#000"/><path d="M310.6,62.6 H322.6 L316.5,69.2 Z" fill="none" stroke="#000" stroke-width="1.3"/><rect x="305.2" y="73" width="21.8" height="1.7" fill="#000"/><rect x="305.2" y="76.2" width="21.8" height="1.6" fill="#000"/><rect x="305.2" y="79.1" width="21.8" height="1.7" fill="#000"/><rect x="315" y="72.5" width="2.8" height="8.5" fill="#000"/><rect x="312.3" y="71.6" width="8.4" height="1.6" fill="#000"/><rect x="312.3" y="80.6" width="8.4" height="1.1" fill="#000"/><rect x="345" y="61" width="21" height="21" fill="#000"/><rect x="346" y="62" width="3" height="3" fill="#fff"/><rect x="347" y="63" width="1" height="1" fill="#444"/><rect x="346" y="66" width="3" height="3" fill="#fff"/><rect x="347" y="67" width="1" height="1" fill="#444"/><rect x="346" y="70" width="3" height="3" fill="#fff"/><rect x="347" y="71" width="1" height="1" fill="#444"/><rect x="346" y="74" width="3" height="3" fill="#fff"/><rect x="347" y="75" width="1" height="1" fill="#444"/><rect x="346" y="78" width="3" height="3" fill="#fff"/><rect x="347" y="79" width="1" height="1" fill="#444"/><rect x="350" y="62" width="3" height="3" fill="#fff"/><rect x="351" y="63" width="1" height="1" fill="#444"/><rect x="350" y="66" width="3" height="3" fill="#fff"/><rect x="351" y="67" width="1" height="1" fill="#444"/><rect x="350" y="70" width="3" height="3" fill="#fff"/><rect x="351" y="71" width="1" height="1" fill="#444"/><rect x="350" y="74" width="3" height="3" fill="#fff"/><rect x="351" y="75" width="1" height="1" fill="#444"/><rect x="350" y="78" width="3" height="3" fill="#fff"/><rect x="351" y="79" width="1" height="1" fill="#444"/><rect x="354" y="62" width="3" height="3" fill="#fff"/><rect x="355" y="63" width="1" height="1" fill="#444"/><rect x="354" y="66" width="3" height="3" fill="#fff"/><rect x="355" y="67" width="1" height="1" fill="#444"/><rect x="354" y="70" width="3" height="3" fill="#fff"/><rect x="355" y="71" width="1" height="1" fill="#444"/><rect x="354" y="74" width="3" height="3" fill="#fff"/><rect x="355" y="75" width="1" height="1" fill="#444"/><rect x="354" y="78" width="3" height="3" fill="#fff"/><rect x="355" y="79" width="1" height="1" fill="#444"/><rect x="358" y="62" width="3" height="3" fill="#fff"/><rect x="359" y="63" width="1" height="1" fill="#444"/><rect x="358" y="66" width="3" height="3" fill="#fff"/><rect x="359" y="67" width="1" height="1" fill="#444"/><rect x="358" y="70" width="3" height="3" fill="#fff"/><rect x="359" y="71" width="1" height="1" fill="#444"/><rect x="358" y="74" width="3" height="3" fill="#fff"/><rect x="359" y="75" width="1" height="1" fill="#444"/><rect x="358" y="78" width="3" height="3" fill="#fff"/><rect x="359" y="79" width="1" height="1" fill="#444"/><rect x="362" y="62" width="3" height="3" fill="#fff"/><rect x="363" y="63" width="1" height="1" fill="#444"/><rect x="362" y="66" width="3" height="3" fill="#fff"/><rect x="363" y="67" width="1" height="1" fill="#444"/><rect x="362" y="70" width="3" height="3" fill="#fff"/><rect x="363" y="71" width="1" height="1" fill="#444"/><rect x="362" y="74" width="3" height="3" fill="#fff"/><rect x="363" y="75" width="1" height="1" fill="#444"/><rect x="362" y="78" width="3" height="3" fill="#fff"/><rect x="363" y="79" width="1" height="1" fill="#444"/><rect x="398.7" y="61.7" width="11.6" height="10.8" fill="#fff" stroke="#000" stroke-width="1.2"/><rect x="398.1" y="61.1" width="12.8" height="2.9" fill="#000"/><rect x="399.1" y="62.1" width="1.1" height="1.1" fill="#fff"/><rect x="407.90000000000003" y="62.2" width="2" height="0.9" fill="#fff"/><rect x="401.7" y="65.7" width="11.6" height="10.8" fill="#fff" stroke="#000" stroke-width="1.2"/><rect x="401.1" y="65.1" width="12.8" height="2.9" fill="#000"/><rect x="402.1" y="66.1" width="1.1" height="1.1" fill="#fff"/><rect x="410.90000000000003" y="66.19999999999999" width="2" height="0.9" fill="#fff"/><rect x="404.8" y="69.8" width="11.6" height="10.8" fill="#fff" stroke="#000" stroke-width="1.2"/><rect x="404.2" y="69.2" width="12.8" height="2.9" fill="#000"/><rect x="405.2" y="70.2" width="1.1" height="1.1" fill="#fff"/><rect x="414.0" y="70.3" width="2" height="0.9" fill="#fff"/><rect x="406.1" y="73" width="7.5" height="1" fill="#000"/><rect x="406.1" y="75" width="2.7" height="1" fill="#000"/><rect x="406.1" y="77" width="8.7" height="1" fill="#000"/><rect x="438" y="64.1" width="2.9" height="2.5" fill="#000"/><path d="M438.3,66.4 H441.4 L443.8,68.6 V72.6 H442.6 V70.2 L442.2,70.4 V73.6 L444.8,78 V80.6 H443.2 V79 L440.6,76.2 L438,77.6 V79 H436 V76.2 L438,74 V70.4 L437.6,71.6 H436 V70 L438.3,67.6 Z" fill="#000"/><rect x="436.8" y="80" width="1.1" height="1.1" fill="#000"/><rect x="438.9" y="80" width="1.1" height="1.1" fill="#000"/><rect x="440.9" y="80" width="1.1" height="1.1" fill="#000"/><defs><pattern id="dith" width="2" height="2" patternUnits="userSpaceOnUse"><rect width="2" height="2" fill="#e8e8e8"/><rect width="1" height="1" fill="#7a7a7a"/><rect x="1" y="1" width="1" height="1" fill="#7a7a7a"/></pattern></defs><rect x="449" y="63.1" width="5" height="16.7" fill="url(#dith)"/><rect x="447.1" y="63.1" width="2.2" height="16.7" fill="#000"/><rect x="449.2" y="64.0" width="0.9" height="0.8" fill="#000"/><rect x="449.2" y="65.6" width="0.9" height="0.8" fill="#000"/><rect x="449.2" y="67.2" width="0.9" height="0.8" fill="#000"/><rect x="449.2" y="68.8" width="0.9" height="0.8" fill="#000"/><rect x="449.2" y="70.4" width="0.9" height="0.8" fill="#000"/><rect x="449.2" y="72.0" width="0.9" height="0.8" fill="#000"/><rect x="449.2" y="73.6" width="0.9" height="0.8" fill="#000"/><rect x="449.2" y="75.2" width="0.9" height="0.8" fill="#000"/><rect x="449.2" y="76.8" width="0.9" height="0.8" fill="#000"/><rect x="449.2" y="78.4" width="0.9" height="0.8" fill="#000"/><path d="M495,66.7 L501.2,72.35 L495,78 Z" fill="#000"/><path d="M31.8,235.3 H43.6 V252.6 H30.3 V236.8 Z" fill="none" stroke="#000" stroke-width="1.3"/><rect x="31.2" y="236.2" width="1.2" height="1.2" fill="#000"/><path d="M42.5,238.8 L45,241.3 L47.5,238.8 L50,241.3 L47.5,243.9 L50,246.5 L47.5,249 L45,246.5 L42.5,249 L40,246.5 L42.5,243.9 L40,241.3 Z" fill="#f0f0f0" stroke="#000" stroke-width="1.2"/><path d="M76.5,237.7 Q76.5,235.2 81.0,235.2 H87.5 Q92,235.2 92,237.7 V249.0 Q92,251.5 87.5,251.5 H81.0 Q76.5,251.5 76.5,249.0 Z" fill="none" stroke="#a0a0a0" stroke-width="1.1"/><path d="M76.5,238.5 Q76.5,240 81.0,240 H87.5 Q92,240 92,238.5" fill="none" stroke="#a0a0a0" stroke-width="1.1"/><path d="M87.5,249.6 H97.8 L92.6,242.8 Z" fill="#f0f0f0" stroke="#a0a0a0" stroke-width="1.1"/><rect x="122.2" y="234.9" width="14.8" height="1.4" fill="#000"/><rect x="139.1" y="234.8" width="1.9" height="1.8" fill="#000"/><rect x="122.2" y="237.9" width="14.8" height="1.4" fill="#000"/><rect x="139.1" y="237.8" width="1.9" height="1.8" fill="#000"/><rect x="122.2" y="240.9" width="14.8" height="1.4" fill="#000"/><rect x="139.1" y="240.8" width="1.9" height="1.8" fill="#000"/><rect x="122.2" y="243.9" width="14.8" height="1.4" fill="#000"/><rect x="139.1" y="243.8" width="1.9" height="1.8" fill="#000"/><rect x="122.2" y="246.9" width="14.8" height="1.4" fill="#000"/><rect x="139.1" y="246.8" width="1.9" height="1.8" fill="#000"/><rect x="122.2" y="249.9" width="14.8" height="1.4" fill="#000"/><rect x="139.1" y="249.8" width="1.9" height="1.8" fill="#000"/><rect x="122.2" y="252.9" width="14.8" height="1.4" fill="#000"/><rect x="139.1" y="252.8" width="1.9" height="1.8" fill="#000"/><rect x="156.8" y="226.5" width="41.6" height="37" rx="5" ry="5" fill="none" stroke="#d4692f" stroke-width="3"/><path d="M175.9,239 L181.9,244.5 L175.9,250 Z" fill="#000"/><path d="M208,232.8 L214,238.4 L208,244 Z" fill="#000"/><rect x="215" y="247" width="13" height="1.6" fill="#000"/><rect x="215" y="249.4" width="13" height="1.6" fill="#000"/><rect x="215" y="251.8" width="13" height="1.6" fill="#000"/><rect x="220.5" y="246" width="3" height="7.4" fill="#000"/><rect x="219" y="246" width="5.5" height="1" fill="#000"/><rect x="252" y="239.8" width="9" height="9" fill="#9b9b9b"/><path d="M297.8,243 V236.6 L299.4,235.2 H311 V243" fill="none" stroke="#000" stroke-width="1.4"/><path d="M294.8,248.6 V243 Q294.8,241.6 296.4,241.6 H312.4 Q313.8,241.6 313.8,243 V248.6 Z" fill="none" stroke="#000" stroke-width="1.5"/><rect x="297.8" y="247.2" width="13.2" height="5" fill="#f0f0f0" stroke="#000" stroke-width="1.4"/><path d="M341.8,237.9 Q341.8,235.4 346.3,235.4 H354.1 Q358.6,235.4 358.6,237.9 V249.9 Q358.6,252.4 354.1,252.4 H346.3 Q341.8,252.4 341.8,249.9 Z" fill="none" stroke="#a4a4a4" stroke-width="1.1"/><path d="M341.8,238.7 Q341.8,240.2 346.3,240.2 H354.1 Q358.6,240.2 358.6,238.7" fill="none" stroke="#a4a4a4" stroke-width="1.1"/><rect x="356.4" y="241" width="1.6" height="10" fill="#a0a0a0"/><path d="M349,237.8 L342.5,244.3" stroke="#f0f0f0" stroke-width="4"/><path d="M349,237.8 L342.8,244" stroke="#999" stroke-width="2.4"/><path d="M339.2,242.2 L345.6,248.6 L339.2,249.4 Z" fill="#999"/><rect x="383.4" y="235.5" width="15.4" height="14.9" fill="none" stroke="#a4a4a4" stroke-width="1.1"/><rect x="385.6" y="236.3" width="11" height="7.2" fill="none" stroke="#a4a4a4" stroke-width="1"/><rect x="387" y="246" width="8.6" height="4.4" fill="none" stroke="#a4a4a4" stroke-width="1.1"/><rect x="390.6" y="246" width="1.4" height="4.4" fill="#a4a4a4"/><path d="M388.6,236.4 L382.8,242.2" stroke="#f0f0f0" stroke-width="4"/><path d="M388.6,236.4 L383,242" stroke="#999" stroke-width="2.4"/><path d="M379.8,240.4 L385.8,246.4 L379.8,247 Z" fill="#999"/><path d="M428,237.9 Q428,235.4 432.5,235.4 H440.3 Q444.8,235.4 444.8,237.9 V250.0 Q444.8,252.5 440.3,252.5 H432.5 Q428,252.5 428,250.0 Z" fill="none" stroke="#000" stroke-width="1.3"/><path d="M428,238.8 Q428,240.3 432.5,240.3 H440.3 Q444.8,240.3 444.8,238.8" fill="none" stroke="#000" stroke-width="1.3"/><rect x="442" y="241.5" width="1.2" height="9.5" fill="#777"/><path d="M426.2,242.7 L429.6,246.3 L434.7,237.6 M426.2,247.8 L429.6,250.8 L435.2,243.2" fill="none" stroke="#f0f0f0" stroke-width="3.8"/><path d="M426.2,242.7 L429.6,246.3 L434.7,237.6 M426.2,247.8 L429.6,250.8 L435.2,243.2" fill="none" stroke="#888" stroke-width="2.3"/><rect x="469.2" y="235.5" width="15.4" height="14.6" fill="none" stroke="#000" stroke-width="1.3"/><rect x="471.4" y="236.3" width="11" height="7.4" fill="none" stroke="#000" stroke-width="1"/><rect x="472.8" y="246.2" width="8.4" height="4" fill="#000"/><rect x="474" y="247.2" width="2.4" height="3" fill="#fff"/><rect x="477.6" y="247.2" width="2.4" height="3" fill="#fff"/><path d="M467.5,239.5 L470,242.5 L474.5,236 M467.5,244.5 L470,247.3 L475.5,240.5" fill="none" stroke="#f0f0f0" stroke-width="3.6"/><path d="M467.5,239.5 L470,242.5 L474.5,236 M467.5,244.5 L470,247.3 L475.5,240.5" fill="none" stroke="#888" stroke-width="2.2"/><path d="M504.5,263 V225.5 H542" fill="none" stroke="#a8a8a8" stroke-width="1"/><path d="M518,236.6 H529.8 V253 H516.6 V238 Z" fill="none" stroke="#000" stroke-width="1.3"/><rect x="517.4" y="237.6" width="1.2" height="1.2" fill="#000"/><path d="M525.4,242.4 H535.8 L530.6,248.4 Z" fill="#f0f0f0" stroke="#000" stroke-width="1.3"/><path d="M1243.8,210.6 L1248.6,214.2 L1243.8,217.8 Z M1266.8,210.6 L1262,214.2 L1266.8,217.8 Z" fill="#fff" stroke="#000" stroke-width="1"/><rect x="1251.7" y="206" width="6.6" height="15.6" rx="3.3" ry="4.5" fill="none" stroke="#000" stroke-width="2.6"/><rect x="1244.3" y="246" width="22.6" height="14.6" fill="none" stroke="#000" stroke-width="2"/><rect x="1246" y="242.9" width="8.8" height="2.8" fill="#000"/><rect x="1258" y="242.9" width="9" height="2.8" fill="#000"/><rect x="1243.3" y="260" width="2.6" height="2.7" fill="#000"/><rect x="1248.6" y="260" width="8.2" height="2.7" fill="#000"/><rect x="1241.1" y="248.4" width="2.4" height="1.5" fill="#000"/><rect x="1246" y="248.4" width="1.9" height="1.8" fill="#000"/><rect x="1241.1" y="251.5" width="2.4" height="1.5" fill="#000"/><rect x="1246" y="251.5" width="1.9" height="1.8" fill="#000"/><rect x="1241.1" y="254.6" width="2.4" height="1.5" fill="#000"/><rect x="1246" y="254.6" width="1.9" height="1.8" fill="#000"/><rect x="1241.1" y="257.6" width="2.4" height="1.5" fill="#000"/><rect x="1246" y="257.6" width="1.9" height="1.8" fill="#000"/><rect x="1252" y="249" width="3" height="1.1" fill="#000"/><rect x="1257" y="249" width="3" height="1.1" fill="#000"/><rect x="1262" y="249" width="3" height="1.1" fill="#000"/><rect x="1247" y="246.8" width="1" height="1" fill="#000"/><rect x="1249" y="246.8" width="1" height="1" fill="#000"/><rect x="1251" y="246.8" width="1" height="1" fill="#000"/><rect x="1253" y="246.8" width="1" height="1" fill="#000"/><rect x="1255" y="246.8" width="1" height="1" fill="#000"/><rect x="1257" y="246.8" width="1" height="1" fill="#000"/><rect x="1259" y="246.8" width="1" height="1" fill="#000"/><rect x="1261" y="246.8" width="1" height="1" fill="#000"/><rect x="1263" y="246.8" width="1" height="1" fill="#000"/><rect x="1265" y="246.8" width="1" height="1" fill="#000"/><rect x="1252" y="253.1" width="4.8" height="4.7" fill="#000"/><rect x="1262" y="255" width="3.2" height="2.8" fill="#000"/><text x="1247.8" y="282.2" font-family="Liberation Sans" font-weight="bold" font-size="6" fill="#000">1</text><path d="M1254.6,279 V286.5 M1252,284 L1254.6,286.8 L1257.2,284" fill="none" stroke="#000" stroke-width="1.4"/><defs><linearGradient id="lg" x1="0" y1="0" x2="0" y2="1"><stop offset="0" stop-color="#e2301e"/><stop offset="1" stop-color="#a83424"/></linearGradient></defs><g transform="translate(4,7)"><rect x="0" y="0" width="16" height="16" fill="url(#lg)"/><path d="M7.9,1.6 L13.4,10.2 H11.2 L7.9,4.9 L4.6,10.2 H2.4 Z" fill="#f6d8cc"/><rect x="1" y="10" width="14" height="1.5" fill="#f6d8cc"/><rect x="1" y="12.5" width="14" height="1.2" fill="#f6d8cc"/><rect x="1" y="14.5" width="14" height="1.1" fill="#f6d8cc"/><rect x="6.3" y="9" width="3.2" height="6.3" fill="#f6d8cc"/></g><g transform="translate(9,32)"><rect x="0" y="0" width="16" height="16" fill="url(#lg)"/><path d="M7.9,1.6 L13.4,10.2 H11.2 L7.9,4.9 L4.6,10.2 H2.4 Z" fill="#f6d8cc"/><rect x="1" y="10" width="14" height="1.5" fill="#f6d8cc"/><rect x="1" y="12.5" width="14" height="1.2" fill="#f6d8cc"/><rect x="1" y="14.5" width="14" height="1.1" fill="#f6d8cc"/><rect x="6.3" y="9" width="3.2" height="6.3" fill="#f6d8cc"/></g><path d="M183.40,241.00L183.40,260.92L188.08,256.60L191.68,264.52L194.92,263.08L191.32,255.04L196.60,254.44Z" fill="#fff" stroke="#000" stroke-width="1.56" stroke-linejoin="miter"/><path d="M192.6,265.4 L194.4,268.2 H197 L197.6,265.6" fill="none" stroke="#000" stroke-width="1.6"/><rect x="156.8" y="226.5" width="41.6" height="37" rx="5" ry="5" fill="none" stroke="#d4692f" stroke-width="3"/><path d="M677.20,692.90L677.20,717.80L683.05,712.40L687.55,722.30L691.60,720.50L687.10,710.45L693.70,709.70Z" fill="#fff" stroke="#000" stroke-width="1.95" stroke-linejoin="miter"/></svg>
</body></html>
